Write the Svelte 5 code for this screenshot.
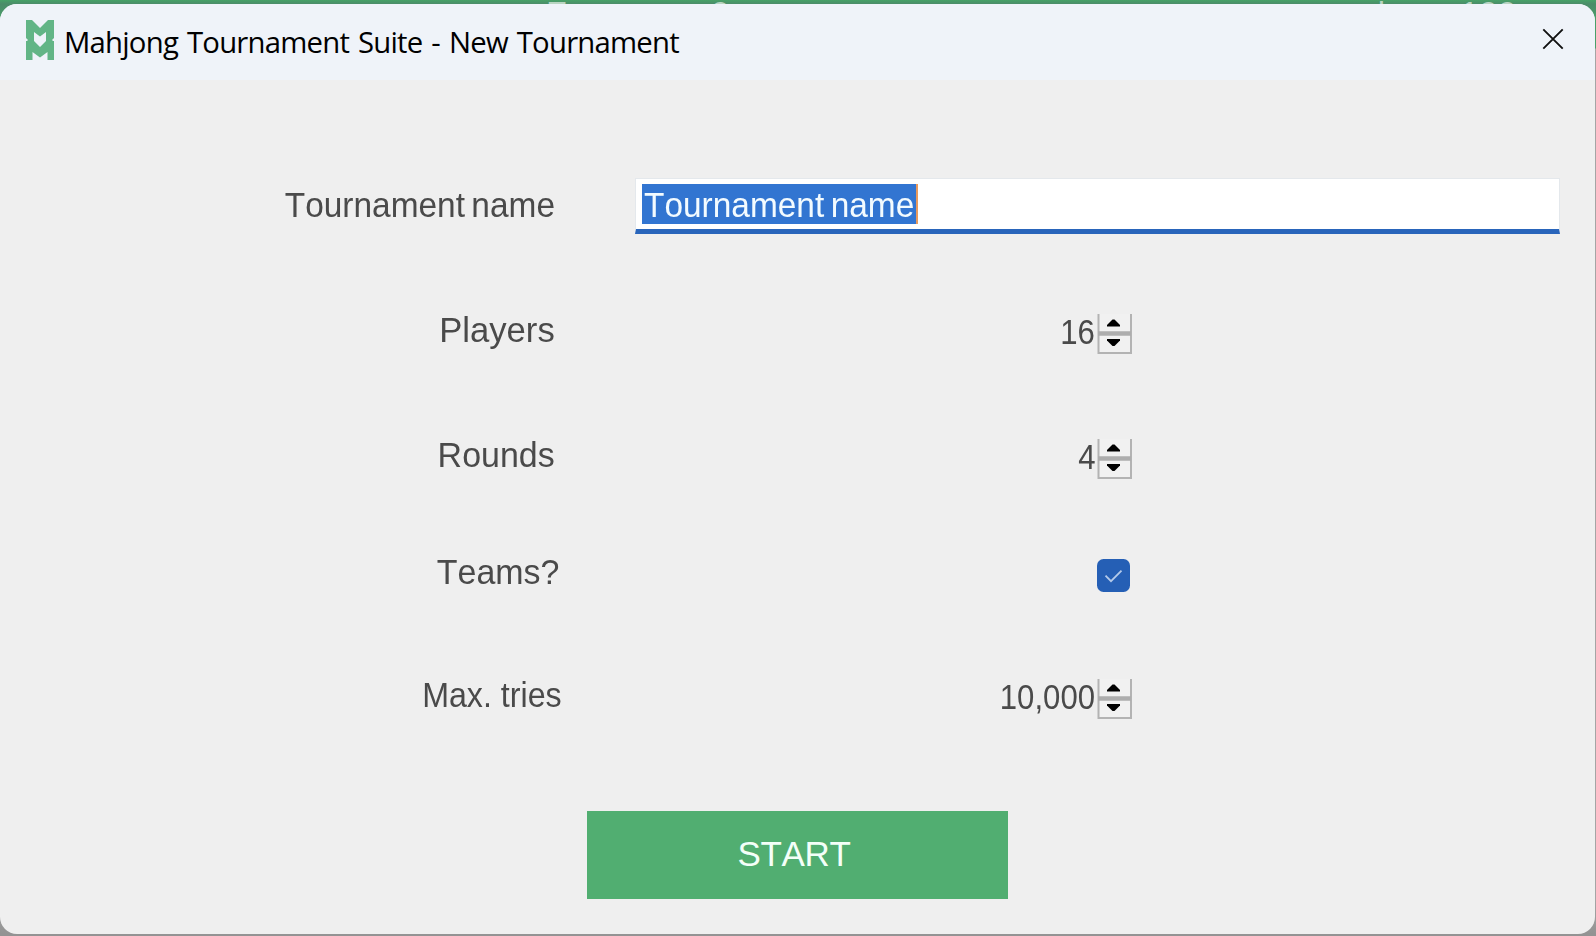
<script>
  const peeks = [
    { text: 'F', x: 546 },
    { text: '9', x: 711 },
    { text: '|', x: 1377 },
    { text: '100', x: 1460 },
  ];
  const rows = [
    { label: 'Tournament name', kind: 'text', scale: 0.955, end: 554.5 },
    { label: 'Players', kind: 'spin', value: '16', scale: 0.99, end: 554.5 },
    { label: 'Rounds', kind: 'spin', value: '4', scale: 0.97, end: 554.5 },
    { label: 'Teams?', kind: 'check', scale: 0.97, end: 559.5 },
    { label: 'Max. tries', kind: 'spin', value: '10,000', scale: 0.92, end: 562 },
  ];
</script>

<div class="desktop">
  <div class="behind">
    {#each peeks as p}<span style="left:{p.x}px">{p.text}</span>{/each}
  </div>
  <main class="window">
    <header>
      <svg class="logo" width="28" height="40" viewBox="0 0 28 40">
        <g fill="#62b586">
          <path d="M0 0H6L14 8L22 0H28V18L26 20L28 22H20V12L14 16.5L8 12V22H0L2 20L0 18Z" />
          <path d="M0 21H8L14 27L20 21H28V40H21.5V32L14 37.5L6.5 32V40H0Z" />
        </g>
      </svg>
      <h1>Mahjong Tournament Suite - New Tournament</h1>
      <svg class="close" width="22" height="22" viewBox="0 0 22 22">
        <path d="M1.3 1.3L20.7 20.7M20.7 1.3L1.3 20.7" stroke="#111" stroke-width="1.9" />
      </svg>
    </header>
    <section class="form">
      {#each rows as r}
        <div class="row">
          <div class="label" class:words={r.kind === 'text'} style="width:{r.end}px">
            <span style="transform:scaleX({r.scale})">{r.label}</span>
          </div>
          {#if r.kind === 'text'}
            <div class="input"><div class="sel words"><span>Tournament name</span></div></div>
          {:else if r.kind === 'spin'}
            <div class="number">
              <span class="value">{r.value}</span>
              <svg width="36" height="41" viewBox="0 0 36 41">
                <path d="M2 0H34V39H2Z" fill="#f1f1f1" />
                <path d="M1.5 0V39H34V0" fill="none" stroke="#b3b3b3" stroke-width="2" />
                <path d="M1 19.5H34" stroke="#adadad" stroke-width="4.4" />
                <path d="M10 12.5V11L15.5 5.5H17.5L23 11V12.5Z" fill="#000" />
                <path d="M10 25V26.5L15.5 32H17.5L23 26.5V25Z" fill="#000" />
              </svg>
            </div>
          {:else}
            <svg class="check" width="33" height="33" viewBox="0 0 33 33">
              <rect width="33" height="33" rx="6.5" fill="#255fb5" />
              <path d="M8.5 16.7L14 22.2L24.5 11.7" fill="none" stroke="#b4caea" stroke-width="1.8" />
            </svg>
          {/if}
        </div>
      {/each}
      <button>START</button>
    </section>
  </main>
</div>

<style>
  :global(body) { margin: 0; overflow: hidden; }
  .desktop {
    box-sizing: border-box;
    width: 1596px;
    height: 936px;
    padding: 4px 1px 2px 0;
    background: linear-gradient(#47a167 0, #4b8c69 4px, #49a06a 20px, #49a06a 48px, #a5a5a5 49px, #a5a5a5 900px, #939393 934px);
    overflow: hidden;
    position: relative;
  }
  .behind { position: absolute; inset: 0 0 auto; height: 4px; overflow: hidden; }
  .behind span {
    position: absolute;
    top: -7px;
    font: 34px/40px 'Liberation Sans', sans-serif;
    color: #b9d5c2;
  }
  .window {
    position: relative;
    height: 930px;
    border-radius: 17px;
    background: #efefef;
    overflow: hidden;
  }
  header {
    box-sizing: border-box;
    height: 76px;
    display: flex;
    align-items: flex-start;
    padding: 16px 31px 0 26px;
    background: #eff3f9;
  }
  .logo { filter: blur(0.7px); }
  h1 {
    margin: 1.5px auto 0 10px;
    font: 400 29.3px/40px 'Open Sans', sans-serif;
    letter-spacing: -0.78px;
    word-spacing: 2.1px;
    color: #000;
    white-space: nowrap;
  }
  .close { margin-top: 8px; }
  .form {
    display: grid;
    grid-template-rows: 125.5px 125px 117px 122.5px 136.5px 88px;
    padding-top: 104.5px;
    font: 35px/40px 'Liberation Sans', sans-serif;
    font-kerning: none;
    color: #4a4a4a;
  }
  .row { display: grid; grid-template-columns: 635px 1fr; align-items: start; }
  .label { text-align: right; white-space: nowrap; }
  .label span { display: inline-block; transform-origin: right; }
  .words { word-spacing: -3px; }
  .input {
    box-sizing: border-box;
    width: 925px;
    height: 56px;
    margin-top: -7px;
    padding: 5px 0 0 6px;
    background: #fff;
    border: 1px solid #e4e8ec;
    border-bottom: 5px solid #2965bb;
  }
  .sel {
    box-sizing: border-box;
    width: 276px;
    height: 40px;
    padding: 1px 0 0 2px;
    background: #3275d1;
    border-right: 2px solid #e79a5e;
    color: #f3fbff;
    white-space: nowrap;
  }
  .sel span { display: inline-block; transform: scaleX(0.955); transform-origin: left; }
  .number { display: flex; justify-content: flex-end; width: 498px; padding-top: 2px; }
  .number svg { margin-top: 2px; }
  .value { display: inline-block; transform: scaleX(0.89); transform-origin: right; margin-right: 2px; }
  .check { margin: 6.5px 0 0 462px; }
  button {
    width: 421px;
    height: 88px;
    margin-left: 587px;
    padding: 0 7px 2px 0;
    border: 0;
    background: #51ae71;
    color: #f3fff8;
    font: inherit;
    font-kerning: none;
    letter-spacing: -0.3px;
  }
</style>
